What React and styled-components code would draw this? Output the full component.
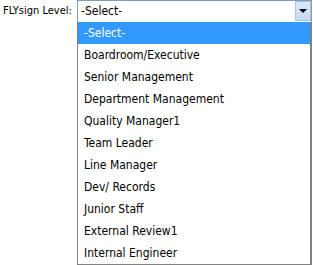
import styled, { createGlobalStyle } from 'styled-components';

const GlobalStyle = createGlobalStyle`
    body {
        margin: 0;
        background: #ffffff;
        font-family: "DejaVu Sans Condensed", "DejaVu Sans", sans-serif;
        font-stretch: condensed;
    }
`;

const Row = styled.div`
    display: flex;
    align-items: flex-start;
    width: 313px;
    height: 265px;
`;

const Label = styled.div`
    width: 77px;
    padding: 4px 0 0 3px;
    box-sizing: border-box;
    font-size: 11px;
    color: #000;
    white-space: nowrap;
`;

const Field = styled.div`
    width: 235px;
    display: flex;
    flex-direction: column;
`;

const SelectBox = styled.div`
    height: 22px;
    box-sizing: border-box;
    border: 1px solid #7f9db9;
    border-bottom: none;
    display: flex;
    align-items: stretch;
    background: #fff;
`;

const SelectValue = styled.div`
    flex: 1;
    padding: 3px 0 0 3px;
    font-size: 12px;
    color: #000;
`;

const ArrowBtn = styled.div`
    width: 16px;
    margin: 0 0 1px;
    box-sizing: border-box;
    border: 1px solid #a9c3e6;
    background: linear-gradient(#dbe9fb, #c4daf7);
    display: flex;
    align-items: center;
    justify-content: center;
`;

const List = styled.ul`
    list-style: none;
    margin: 0;
    padding: 0;
    border: 1px solid #828282;
    border-top: none;
    border-right-width: 2px;
    box-sizing: border-box;
`;

const Option = styled.li`
    height: 22px;
    line-height: 22px;
    padding-left: 6px;
    font-size: 12px;
    color: ${p => (p.$active ? '#fff' : '#000')};
    background: ${p => (p.$active ? '#3399ff' : '#fff')};
    white-space: nowrap;
`;

const options = [
    '-Select-',
    'Boardroom/Executive',
    'Senior Management',
    'Department Management',
    'Quality Manager1',
    'Team Leader',
    'Line Manager',
    'Dev/ Records',
    'Junior Staff',
    'External Review1',
    'Internal Engineer',
];

const App = () => {
    return (
        <>
            <GlobalStyle />
            <Row>
                <Label>FLYsign Level:</Label>
                <Field>
                    <SelectBox>
                        <SelectValue>-Select-</SelectValue>
                        <ArrowBtn>
                            <svg width="8" height="4" viewBox="0 0 8 4">
                                <path d="M0 0h8L4 4z" fill="#000" />
                            </svg>
                        </ArrowBtn>
                    </SelectBox>
                    <List>
                        {options.map((o, i) => (
                            <Option key={o} $active={i === 0}>{o}</Option>
                        ))}
                    </List>
                </Field>
            </Row>
        </>
    );
};

export default App;
